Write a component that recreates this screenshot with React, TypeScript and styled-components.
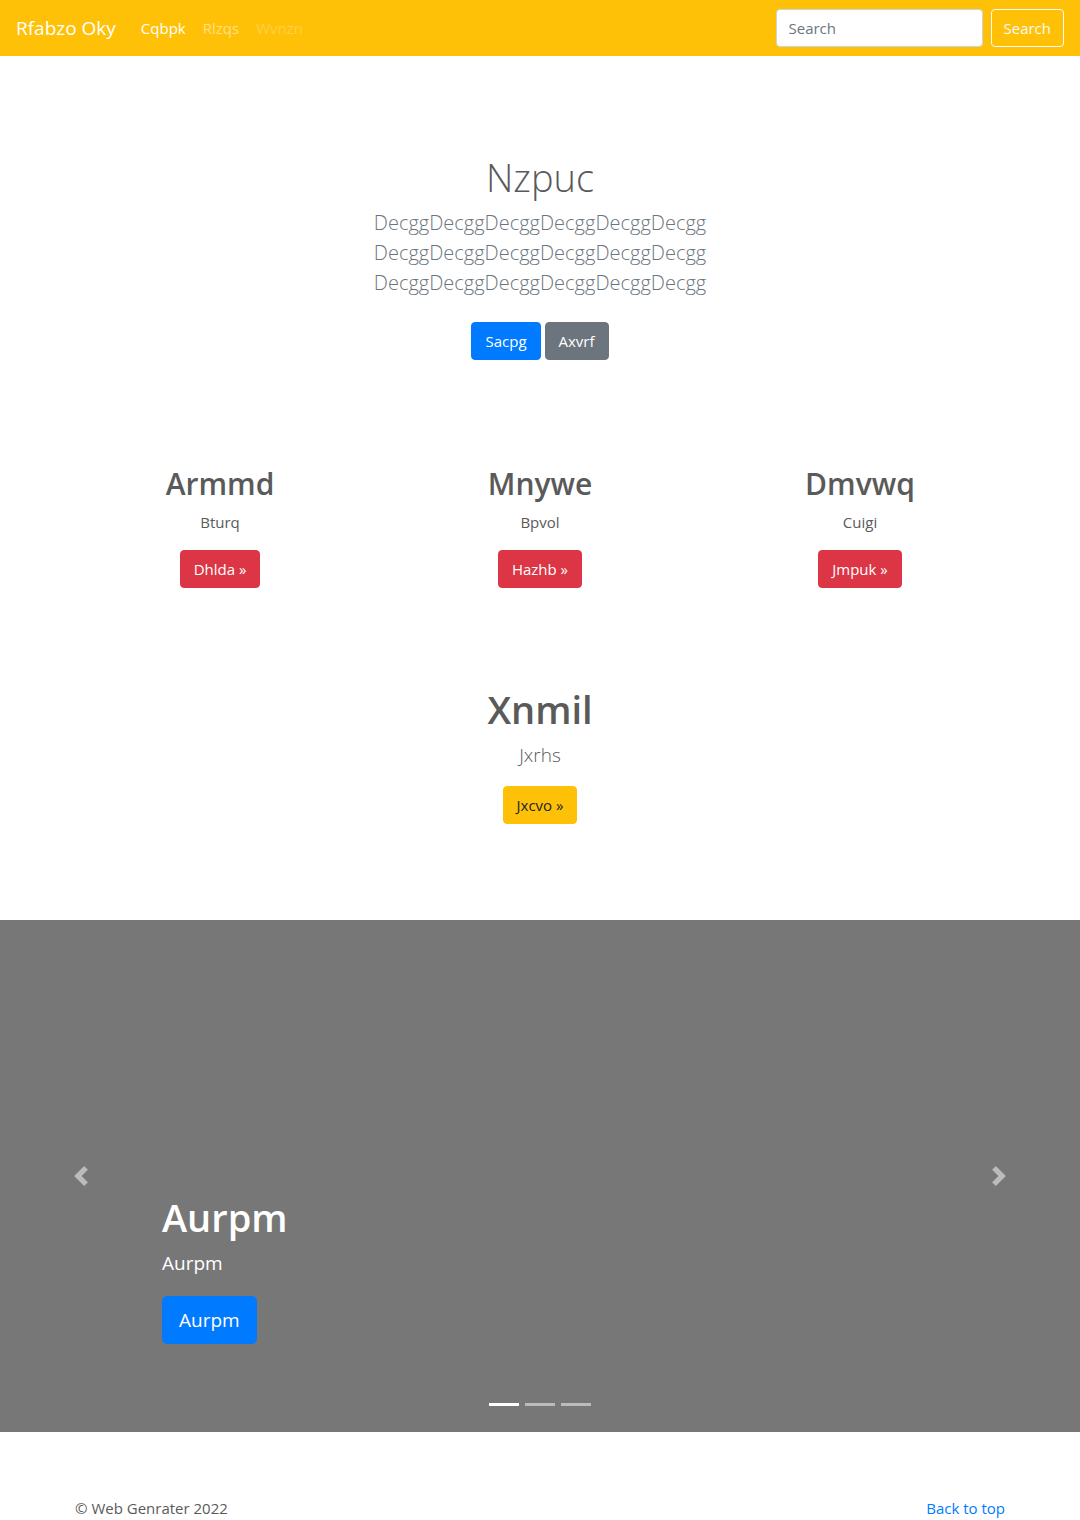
import React from "react";
import styled, { createGlobalStyle } from "styled-components";

const GlobalStyle = createGlobalStyle`
  *, *::before, *::after { box-sizing: border-box; }
  body {
    margin: 0;
    background: #fff;
    color: #5a5a5a;
    font-family: "Open Sans", "Noto Sans", sans-serif;
    font-size: 15px;
    line-height: 24px;
  }
  h1, h2, p { margin: 0; }
`;

const Navbar = styled.nav`
  display: flex;
  align-items: center;
  height: 56px;
  padding: 0 16px;
  background: #ffc107;
`;

const Brand = styled.a`
  margin-right: 17px;
  color: #fff;
  font-size: 19px;
  line-height: 30px;
  text-decoration: none;
`;

const NavLinks = styled.div`
  display: flex;
  flex: 1;
  gap: 1px;
`;

const NavLink = styled.a<{ $alpha: number }>`
  padding: 8px;
  color: rgba(255, 255, 255, ${(p) => p.$alpha});
  text-decoration: none;
`;

const SearchForm = styled.form`
  display: flex;
  gap: 8px;
`;

const SearchInput = styled.input`
  width: 207px;
  height: 38px;
  padding: 6px 12px;
  border: 1px solid #ced4da;
  border-radius: 4px;
  background: #fff;
  color: #495057;
  font: inherit;
  &::placeholder { color: #6c757d; opacity: 1; }
`;

const tones = {
  primary: { bg: "#007bff", border: "#007bff", text: "#fff" },
  secondary: { bg: "#6c757d", border: "#6c757d", text: "#fff" },
  danger: { bg: "#dc3545", border: "#dc3545", text: "#fff" },
  warning: { bg: "#ffc107", border: "#ffc107", text: "#212529" },
  outline: { bg: "transparent", border: "#f8f9fa", text: "#f8f9fa" },
};

const Button = styled.button<{ $tone: keyof typeof tones }>`
  padding: 6px ${(p) => (p.$tone === "outline" ? 12 : 13)}px;
  border: 1px solid ${(p) => tones[p.$tone].border};
  border-radius: 4px;
  background: ${(p) => tones[p.$tone].bg};
  color: ${(p) => tones[p.$tone].text};
  font-family: inherit;
  font-size: 15px;
  line-height: 24px;
  cursor: pointer;
`;

const LargeButton = styled(Button)`
  padding: 8px 16px;
  border-radius: 5px;
  font-size: 19px;
  line-height: 30px;
`;

const Section = styled.section`
  display: flex;
  flex-direction: column;
  align-items: center;
  padding: 96px 16px;
  text-align: center;
`;

const Title = styled.h1<{ $light?: boolean }>`
  margin-bottom: 6px;
  font-size: 38px;
  font-weight: ${(p) => (p.$light ? 300 : 600)};
  line-height: 50px;
`;

const Lead = styled.p<{ $muted?: boolean }>`
  margin-bottom: 16px;
  color: ${(p) => (p.$muted ? "#6c757d" : "inherit")};
  font-size: ${(p) => (p.$muted ? 20 : 19)}px;
  font-weight: 300;
  line-height: 30px;
`;

const Actions = styled.div`
  display: flex;
  gap: 4px;
  padding: 8px 0;
`;

const Columns = styled.div`
  display: grid;
  grid-template-columns: repeat(3, 1fr);
  max-width: 960px;
  margin: 0 auto;
`;

const Column = styled.article`
  padding: 0 15px;
  text-align: center;
`;

const ColumnTitle = styled.h2`
  margin-bottom: 6px;
  font-size: 30px;
  font-weight: 600;
  line-height: 40px;
`;

const ColumnText = styled.p`
  margin-bottom: 16px;
`;

const Carousel = styled.section`
  display: grid;
  grid-template-columns: 15% 1fr 15%;
  grid-template-rows: 1fr auto;
  height: 512px;
  background: #777;
  color: #fff;
`;

const Arrow = styled.button`
  display: flex;
  grid-row: 1 / 3;
  align-items: center;
  justify-content: center;
  padding: 0;
  border: 0;
  background: none;
  color: #fff;
  opacity: 0.5;
  cursor: pointer;
`;

const Caption = styled.div`
  align-self: end;
  padding-bottom: 59px;
`;

const CaptionText = styled.p`
  margin-bottom: 18px;
  font-size: 19px;
  line-height: 30px;
`;

const Indicators = styled.div`
  display: flex;
  grid-column: 2;
  grid-row: 2;
  justify-content: center;
  gap: 6px;
  padding-bottom: 26px;
`;

const Indicator = styled.button<{ $active?: boolean }>`
  width: 30px;
  height: 3px;
  padding: 0;
  border: 0;
  background: #fff;
  opacity: ${(p) => (p.$active ? 1 : 0.5)};
  cursor: pointer;
`;

const Footer = styled.footer`
  display: flex;
  justify-content: space-between;
  max-width: 960px;
  margin: 0 auto;
  padding: 64px 15px 0;
`;

const FooterLink = styled.a`
  color: #007bff;
  text-decoration: none;
`;

const columns = [
  { title: "Armmd", text: "Bturq", action: "Dhlda »" },
  { title: "Mnywe", text: "Bpvol", action: "Hazhb »" },
  { title: "Dmvwq", text: "Cuigi", action: "Jmpuk »" },
];

export default function App() {
  return (
    <>
      <GlobalStyle />
      <header>
        <Navbar>
          <Brand href="#">Rfabzo Oky</Brand>
          <NavLinks>
            <NavLink href="#" $alpha={1}>Cqbpk</NavLink>
            <NavLink href="#" $alpha={0.5}>Rlzqs</NavLink>
            <NavLink href="#" $alpha={0.25} aria-disabled="true">Wvnzn</NavLink>
          </NavLinks>
          <SearchForm onSubmit={(e) => e.preventDefault()}>
            <SearchInput type="text" placeholder="Search" aria-label="Search" />
            <Button $tone="outline" type="submit">Search</Button>
          </SearchForm>
        </Navbar>
      </header>
      <main>
        <Section>
          <Title $light>Nzpuc</Title>
          <Lead $muted>
            DecggDecggDecggDecggDecggDecgg<br />
            DecggDecggDecggDecggDecggDecgg<br />
            DecggDecggDecggDecggDecggDecgg
          </Lead>
          <Actions>
            <Button $tone="primary">Sacpg</Button>
            <Button $tone="secondary">Axvrf</Button>
          </Actions>
        </Section>
        <Columns>
          {columns.map((c) => (
            <Column key={c.title}>
              <ColumnTitle>{c.title}</ColumnTitle>
              <ColumnText>{c.text}</ColumnText>
              <Button $tone="danger">{c.action}</Button>
            </Column>
          ))}
        </Columns>
        <Section>
          <Title>Xnmil</Title>
          <Lead>Jxrhs</Lead>
          <Button $tone="warning">Jxcvo »</Button>
        </Section>
        <Carousel>
          <Arrow aria-label="Previous">
            <svg width="20" height="20" viewBox="0 0 8 8" fill="currentColor">
              <path d="M5.25 0l-4 4 4 4 1.5-1.5L4.25 4l2.5-2.5L5.25 0z" />
            </svg>
          </Arrow>
          <Caption>
            <Title>Aurpm</Title>
            <CaptionText>Aurpm</CaptionText>
            <LargeButton $tone="primary">Aurpm</LargeButton>
          </Caption>
          <Arrow aria-label="Next">
            <svg width="20" height="20" viewBox="0 0 8 8" fill="currentColor">
              <path d="M2.75 0l-1.5 1.5L3.75 4l-2.5 2.5L2.75 8l4-4-4-4z" />
            </svg>
          </Arrow>
          <Indicators>
            <Indicator $active aria-label="Slide 1" />
            <Indicator aria-label="Slide 2" />
            <Indicator aria-label="Slide 3" />
          </Indicators>
        </Carousel>
      </main>
      <Footer>
        <p>© Web Genrater 2022</p>
        <FooterLink href="#">Back to top</FooterLink>
      </Footer>
    </>
  );
}
